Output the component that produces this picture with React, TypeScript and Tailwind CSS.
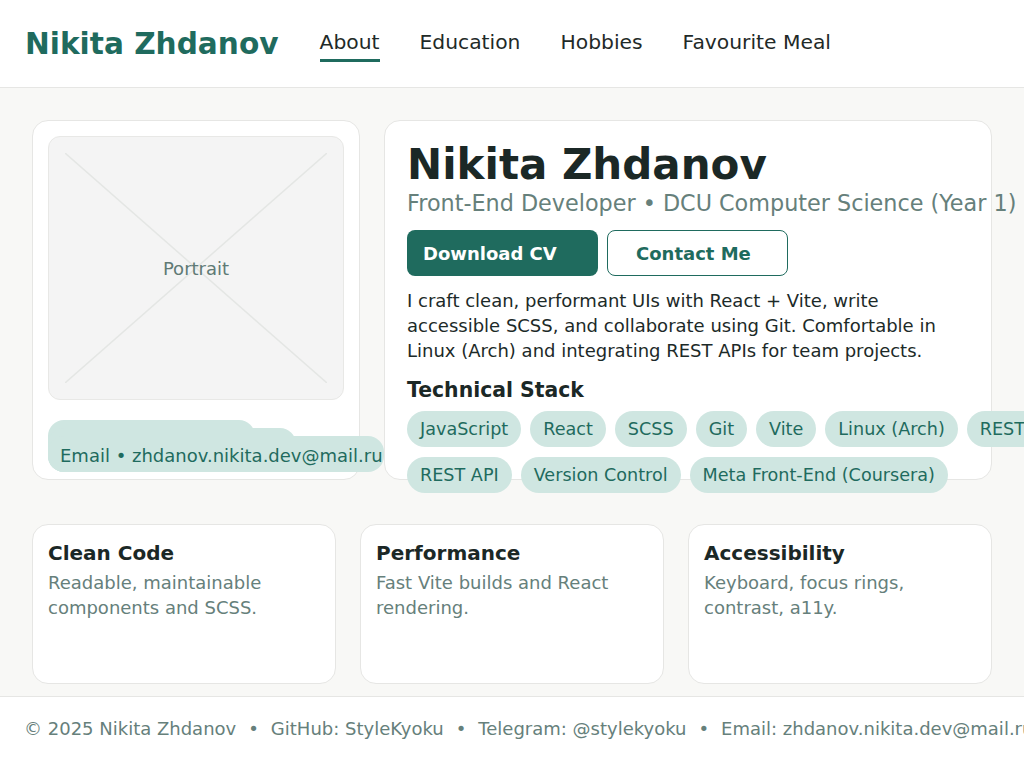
const navItems = ["About", "Education", "Hobbies", "Favourite Meal"];

const stackRow1 = ["JavaScript", "React", "SCSS", "Git", "Vite", "Linux (Arch)", "REST APIs"];
const stackRow2 = ["REST API", "Version Control", "Meta Front-End (Coursera)"];

const features = [
  { title: "Clean Code", text: "Readable, maintainable components and SCSS." },
  { title: "Performance", text: "Fast Vite builds and React rendering." },
  { title: "Accessibility", text: "Keyboard, focus rings, contrast, a11y." },
];

const Chip = ({ label }: { label: string }) => (
  <span className="shrink-0 whitespace-nowrap rounded-full bg-[#cfe6e1] px-[13px] py-1.5 text-[17.6px] leading-6 text-[#1f6b5e]">
    {label}
  </span>
);

export default function App() {
  return (
    <div className="min-h-screen overflow-x-hidden bg-white font-['DejaVu_Sans',sans-serif] text-[#1c2a28]">
      {/* header */}
      <header className="flex h-[88px] items-center gap-[41px] border-b border-[#e6e6e4] bg-white px-[25px]">
        <span className="text-[29.6px] font-bold leading-9 text-[#1f6b5e]">Nikita Zhdanov</span>
        <nav className="flex items-center gap-10 pt-[3px]">
          {navItems.map((item, i) => (
            <a
              key={item}
              href="#"
              className={`border-b-[3px] pb-[3px] text-[20.3px] leading-7 text-[#1f2a28] ${
                i === 0 ? "border-[#1f6b5e]" : "border-transparent"
              }`}
            >
              {item}
            </a>
          ))}
        </nav>
      </header>

      <main className="bg-[#f8f8f6] px-8 pb-3 pt-8">
        <section className="grid grid-cols-[328px_minmax(0,1fr)] gap-6">
          {/* portrait card */}
          <div className="h-[360px] rounded-2xl border border-[#e6e6e4] bg-white p-[15px]">
            <div className="relative flex h-[264px] items-center justify-center rounded-xl border border-[#e8e8e6] bg-[#f4f4f4]">
              <svg className="absolute inset-4 h-[calc(100%-32px)] w-[calc(100%-32px)]" preserveAspectRatio="none" viewBox="0 0 100 100">
                <line x1="0" y1="0" x2="100" y2="100" stroke="#e4e6e4" strokeWidth="1.5" vectorEffect="non-scaling-stroke" />
                <line x1="100" y1="0" x2="0" y2="100" stroke="#e4e6e4" strokeWidth="1.5" vectorEffect="non-scaling-stroke" />
              </svg>
              <span className="relative text-[18px] text-[#607a75]">Portrait</span>
            </div>
            <div className="relative mt-5 h-[52px]">
              <span className="absolute bottom-0 left-0 h-[52px] w-[207px] rounded-2xl bg-[#cfe6e1]" />
              <span className="absolute bottom-0 left-0 h-[44px] w-[248px] rounded-2xl bg-[#cfe6e1]" />
              <span className="absolute bottom-0 left-0 flex h-9 w-[336px] items-center whitespace-nowrap rounded-2xl bg-[#cfe6e1] pl-3 pt-0.5 text-[18px] text-[#1f6b5e]">
                Email • zhdanov.nikita.dev@mail.ru
              </span>
            </div>
          </div>

          {/* intro card */}
          <div className="h-[360px] rounded-2xl border border-[#e6e6e4] bg-white pl-[22px] pt-[22px]">
            <h1 className="text-[42px] font-bold leading-[44px] text-[#1b2826]">Nikita Zhdanov</h1>
            <p className="mt-0.5 whitespace-nowrap text-[22.3px] leading-7 text-[#66807b]">
              Front-End Developer • DCU Computer Science (Year 1)
            </p>
            <div className="mt-[13px] flex gap-[9px]">
              <button className="h-[46px] w-[191px] rounded-lg bg-[#1f6b5e] pl-4 text-left text-[18px] font-bold text-white">
                Download CV
              </button>
              <button className="h-[46px] w-[181px] rounded-lg border border-[#1f6b5e] bg-white pl-7 text-left text-[18px] font-bold text-[#1f6b5e]">
                Contact Me
              </button>
            </div>
            <p className="mt-3 max-w-[562px] text-[18px] leading-[25.2px] text-[#1c2a28]">
              I craft clean, performant UIs with React + Vite, write accessible SCSS, and collaborate using Git.
              Comfortable in Linux (Arch) and integrating REST APIs for team projects.
            </p>
            <h2 className="mt-3 text-[20.4px] font-bold leading-7 text-[#1b2826]">Technical Stack</h2>
            <div className="mt-[7px] flex flex-col gap-[10px]">
              <div className="flex gap-[9px]">
                {stackRow1.map((s) => (
                  <Chip key={s} label={s} />
                ))}
              </div>
              <div className="flex gap-[9px]">
                {stackRow2.map((s) => (
                  <Chip key={s} label={s} />
                ))}
              </div>
            </div>
          </div>
        </section>

        <section className="mt-11 grid grid-cols-3 gap-6">
          {features.map((f) => (
            <div key={f.title} className="h-[160px] rounded-2xl border border-[#e6e6e4] bg-white px-[15px] pt-4">
              <h3 className="text-[20px] font-bold leading-6 text-[#1b2826]">{f.title}</h3>
              <p className="mt-[5px] text-[18px] leading-[25px] text-[#66807b]">{f.text}</p>
            </div>
          ))}
        </section>
      </main>

      <footer className="whitespace-nowrap border-t border-[#e6e6e4] bg-white px-6 py-5 text-[18px] leading-6 text-[#66807b]">
        © 2025 Nikita Zhdanov<span className="mx-3">•</span>GitHub: StyleKyoku<span className="mx-3">•</span>Telegram: @stylekyoku
        <span className="mx-3">•</span>Email: zhdanov.nikita.dev@mail.ru
      </footer>
    </div>
  );
}
